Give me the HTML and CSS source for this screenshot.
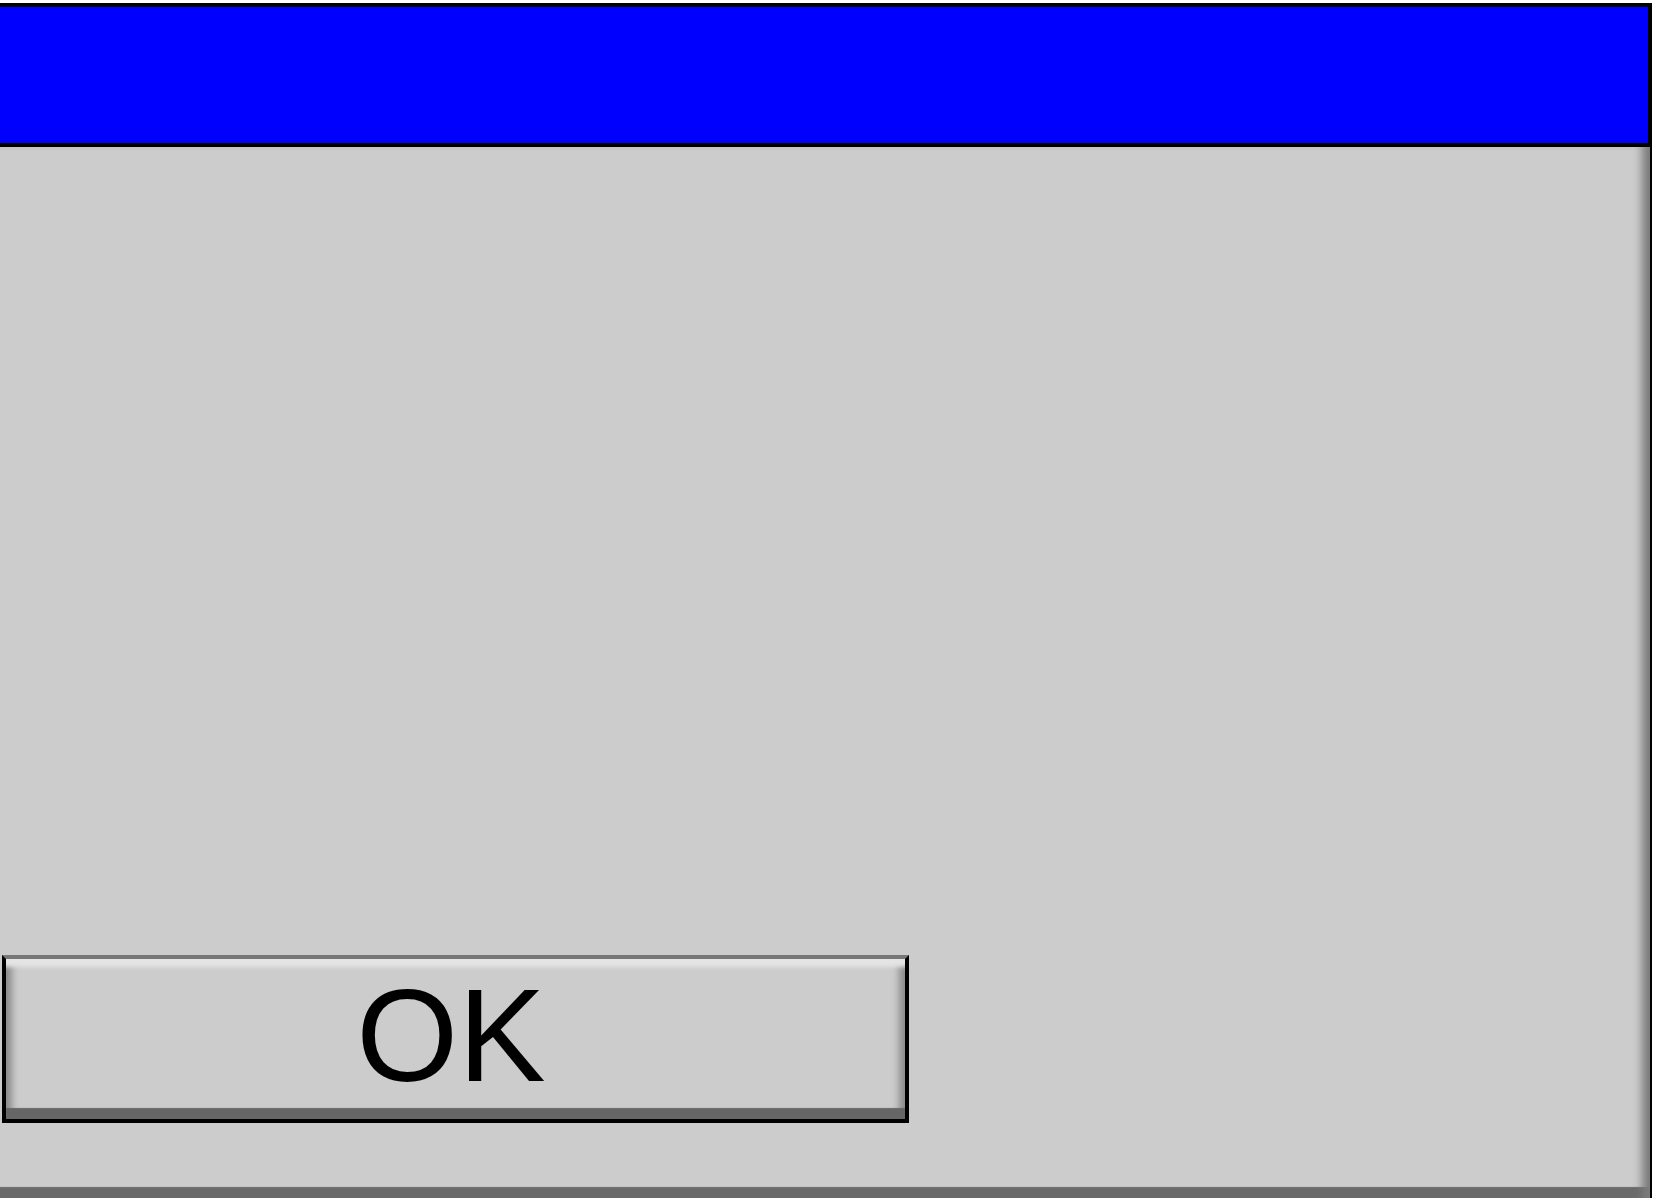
FILE: index.html
```html
<!DOCTYPE html>
<html>
<head>
<meta charset="utf-8">
<title>Dialog</title>
<link rel="stylesheet" href="styles.css">
</head>
<body>
<div class="window">
  <div class="titlebar"></div>
  <div class="panel">
    <button class="ok-button">OK</button>
  </div>
</div>
</body>
</html>
```

FILE: styles.css
```css
html, body {
  margin: 0;
  padding: 0;
  background: #ffffff;
  overflow: hidden;
  width: 1658px;
  height: 1198px;
}

.window {
  margin-top: 3px;
  margin-left: -20px;
  width: 1672px;
  display: flex;
  flex-direction: column;
}

.titlebar {
  box-sizing: border-box;
  height: 144px;
  background: #0000ff;
  border: 4px solid #000000;
}

.panel {
  box-sizing: border-box;
  height: 1051px;
  background: #cccccc;
  border-right: 2px solid #000000;
  padding: 0 0 75px 22px;
  display: flex;
  flex-direction: column;
  justify-content: flex-end;
  align-items: flex-start;
  box-shadow:
    inset -14px 0 8px -6px #7c7c7c,
    inset 0 -12px 1px -1px #6a6a6a;
}

.ok-button {
  box-sizing: border-box;
  width: 907px;
  height: 168px;
  margin: 0;
  padding: 0 9px 6px 0;
  background: #cccccc;
  border-style: solid;
  border-width: 4px;
  border-color: #777777 #000000 #000000 #000000;
  font-family: "Liberation Sans", Arial, sans-serif;
  font-size: 131px;
  line-height: 154px;
  color: #000000;
  text-align: center;
  box-shadow:
    inset 0 12px 4px -4px #e4e4e4,
    inset 0 -12px 1px -1px #666666,
    inset 11px 0 7px -5px #8c8c8c,
    inset -11px 0 7px -5px #8c8c8c;
  cursor: default;
}
```
